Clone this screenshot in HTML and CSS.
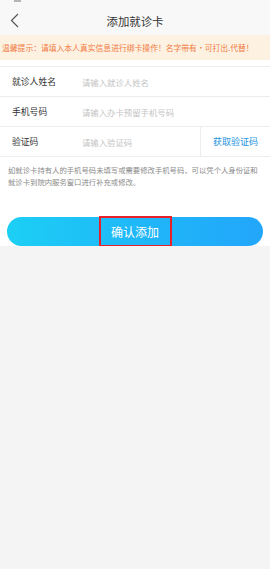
FILE: index.html
```html
<!DOCTYPE html>
<html lang="zh-CN">
<head>
    <meta charset="UTF-8">
    <meta name="viewport" content="width=device-width, initial-scale=1.0">
    <title>添加就诊卡</title>
    <link rel="stylesheet" href="styles.css">
</head>
<body>
    <div class="page">
        <div class="status-bar"><span class="status-mark"></span></div>

        <div class="nav-bar">
            <span class="back">
                <svg width="9" height="15" viewBox="0 0 9 15">
                    <path d="M8 1 L1.5 7.5 L8 14" fill="none" stroke="#555" stroke-width="1.2"/>
                </svg>
            </span>
            <h1 class="nav-title">添加就诊卡</h1>
        </div>

        <div class="notice">温馨提示：请填入本人真实信息进行绑卡操作！名字带有·可打出.代替！</div>

        <div class="form">
            <div class="form-row">
                <span class="label">就诊人姓名</span>
                <span class="placeholder">请输入就诊人姓名</span>
            </div>
            <div class="form-row">
                <span class="label">手机号码</span>
                <span class="placeholder">请输入办卡预留手机号码</span>
            </div>
            <div class="form-row">
                <span class="label">验证码</span>
                <span class="placeholder">请输入验证码</span>
                <span class="get-code">获取验证码</span>
            </div>
        </div>

        <p class="tip">如就诊卡持有人的手机号码未填写或需要修改手机号码，可以凭个人身份证和就诊卡到院内服务窗口进行补充或修改。</p>

        <div class="btn-wrap">
            <button class="confirm-btn"><span class="btn-text">确认添加</span></button>
        </div>
    </div>
</body>
</html>
```

FILE: styles.css
```css
* {
    margin: 0;
    padding: 0;
    box-sizing: border-box;
}

body {
    font-family: "Noto Sans CJK SC", "Noto Sans", sans-serif;
    background: #f4f4f4;
    color: #333333;
}

.page {
    background: #ffffff;
}

.status-bar {
    height: 6px;
    background: #f8f8f8;
    padding-left: 14px;
}

.status-mark {
    display: block;
    width: 7px;
    height: 2px;
    background: #b5b5b5;
}

.nav-bar {
    height: 29px;
    background: #f8f8f8;
    display: flex;
    align-items: center;
    justify-content: center;
    position: relative;
}

.back {
    position: absolute;
    left: 10px;
    top: 7px;
    line-height: 0;
}

.nav-title {
    font-size: 11.4px;
    font-weight: normal;
    color: #333333;
}

.notice {
    height: 25px;
    background: #fdf1e2;
    color: #f07a3e;
    font-size: 7.8px;
    line-height: 25px;
    padding-left: 2px;
    white-space: nowrap;
    overflow: hidden;
}

.form {
    margin-top: 6px;
    border-top: 1px solid #ededed;
}

.form-row {
    height: 30px;
    display: flex;
    align-items: center;
    border-bottom: 1px solid #ededed;
    padding-left: 12px;
}

.label {
    width: 70px;
    font-size: 8.8px;
    color: #333333;
}

.placeholder {
    flex: 1;
    font-size: 8.4px;
    color: #c4c4c4;
}

.get-code {
    align-self: stretch;
    display: flex;
    align-items: center;
    width: 70px;
    padding-left: 12px;
    border-left: 1px solid #ededed;
    font-size: 9px;
    color: #1c93e0;
}

.tip {
    padding: 7px 8px 0 8px;
    font-size: 7.35px;
    line-height: 12px;
    color: #8a8a8a;
}

.btn-wrap {
    padding: 29px 7px 0 7px;
}

.confirm-btn {
    width: 100%;
    height: 29px;
    border: none;
    border-radius: 15px;
    background: linear-gradient(90deg, #1ccff4 0%, #1fb8f8 50%, #22a6fb 100%);
    display: flex;
    align-items: center;
    justify-content: center;
    font-family: inherit;
}

.btn-text {
    display: flex;
    align-items: center;
    justify-content: center;
    width: 73px;
    height: 31px;
    border: 2px solid #e8202a;
    color: #ffffff;
    font-size: 12px;
}
```
